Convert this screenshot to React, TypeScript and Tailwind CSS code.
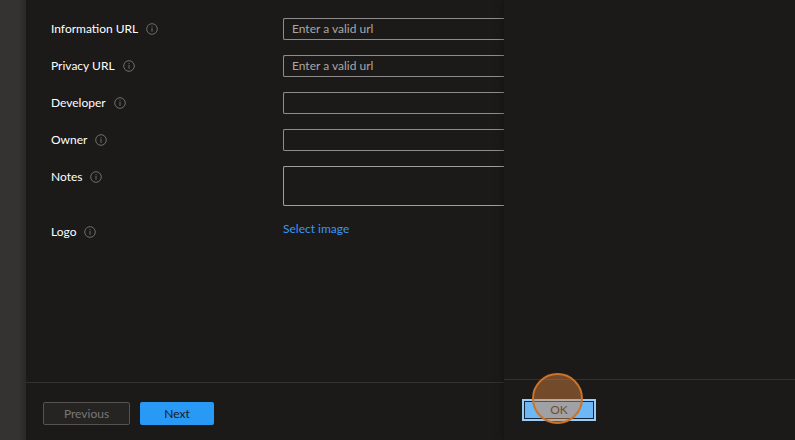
import type { ReactNode } from "react"

const urlFields = [
  { id: "information-url", label: "Information URL", placeholder: "Enter a valid url" },
  { id: "privacy-url", label: "Privacy URL", placeholder: "Enter a valid url" },
  { id: "developer", label: "Developer", placeholder: "" },
  { id: "owner", label: "Owner", placeholder: "" },
]

function InfoIcon() {
  return (
    <svg className="size-3 shrink-0" viewBox="0 0 12 12" fill="none" stroke="#858380" aria-hidden="true">
      <circle cx="6" cy="6" r="5.3" strokeWidth="0.8" />
      <path d="M6 5v3.8M6 3.2v1" strokeWidth="0.8" />
    </svg>
  )
}

function FieldRow({ id, label, children }: { id: string; label: string; children: ReactNode }) {
  return (
    <div className="flex items-start">
      <label htmlFor={id} className="flex h-[22px] w-[232px] shrink-0 items-center gap-2 text-white">
        {label}
        <InfoIcon />
      </label>
      <div className="flex min-w-0 flex-1">{children}</div>
    </div>
  )
}

export default function App() {
  return (
    <div className="flex h-screen overflow-hidden bg-[#1b1a19] font-[Lato,'Open_Sans',sans-serif] text-xs">
      <div className="w-[26px] shrink-0 bg-linear-to-r from-[#343331] from-70% to-[#2a2927]" />

      <main className="flex min-w-0 flex-1 flex-col">
        <form className="flex flex-1 flex-col gap-[15px] pt-[18px] pl-[25px]">
          {urlFields.map((field) => (
            <FieldRow key={field.id} id={field.id} label={field.label}>
              <input
                id={field.id}
                type="text"
                placeholder={field.placeholder}
                className="h-[22px] w-full rounded-l-xs border border-r-0 border-[#8f8d8b] bg-transparent px-2 pb-0.5 text-white outline-none placeholder:text-[#a9a7a5]"
              />
            </FieldRow>
          ))}
          <FieldRow id="notes" label="Notes">
            <textarea
              id="notes"
              className="h-10 w-full resize-none rounded-l-xs border border-r-0 border-[#a19f9d] bg-transparent px-2 text-white outline-none"
            />
          </FieldRow>
          <FieldRow id="logo" label="Logo">
            <button id="logo" type="button" className="text-[#3a96f5]">
              Select image
            </button>
          </FieldRow>
        </form>

        <footer className="flex h-[58px] shrink-0 items-start gap-[10px] border-t border-[#323130] pt-[19px] pl-[17px]">
          <button
            type="button"
            disabled
            className="h-[23px] w-[87px] rounded-xs border border-[#55534f] bg-[#252423] text-[#797775]"
          >
            Previous
          </button>
          <button type="button" className="h-[23px] w-[74px] rounded-xs bg-[#2899f5] text-[#1b1a19]">
            Next
          </button>
        </footer>
      </main>

      <aside className="flex w-[291px] shrink-0 flex-col bg-[#1b1a19] shadow-[0_0_8px_rgba(0,0,0,0.4)]">
        <footer className="mt-auto h-[61px] border-t border-[#323130] pt-[19px] pl-[18px]">
          <div className="relative w-[74px]">
            <button
              type="button"
              className="block h-[22px] w-full border-2 border-[#9ccbf3] bg-[#6cb8f6] text-[#1b1a19] outline-1 -outline-offset-3 outline-[#12263b]"
            >
              OK
            </button>
            {/* click marker */}
            <span className="pointer-events-none absolute -top-[26px] left-[10px] size-[51px] rounded-full border-2 border-[#c9732b] bg-[#e08440]/45" />
          </div>
        </footer>
      </aside>
    </div>
  )
}
